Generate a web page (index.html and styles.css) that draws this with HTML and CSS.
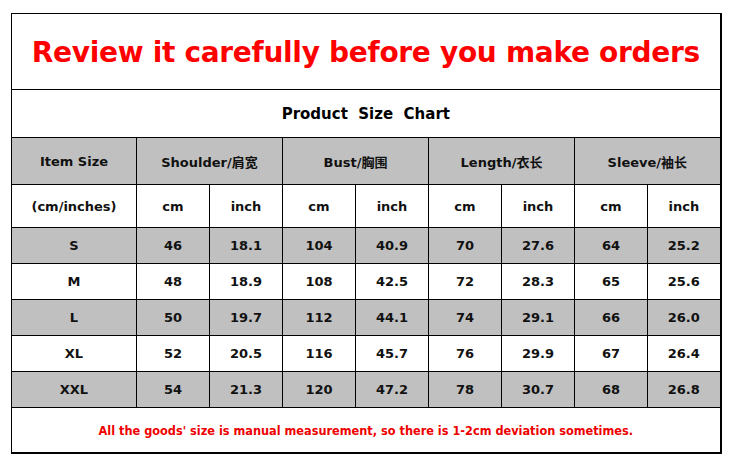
FILE: index.html
```html
<!DOCTYPE html>
<html>
<head>
<meta charset="utf-8">
<link rel="stylesheet" href="styles.css">
</head>
<body>
<table class="chart">
  <colgroup>
    <col class="c-first">
    <col class="c"><col class="c"><col class="c"><col class="c">
    <col class="c"><col class="c"><col class="c"><col class="c">
  </colgroup>
  <tr class="r-title"><td colspan="9" class="title">Review it carefully before you make orders</td></tr>
  <tr class="r-sub"><td colspan="9" class="sub">Product&nbsp; Size&nbsp; Chart</td></tr>
  <tr class="r-head gray">
    <td>Item Size</td>
    <td colspan="2">Shoulder/肩宽</td>
    <td colspan="2">Bust/胸围</td>
    <td colspan="2">Length/衣长</td>
    <td colspan="2">Sleeve/袖长</td>
  </tr>
  <tr class="r-unit">
    <td>(cm/inches)</td>
    <td>cm</td><td>inch</td><td>cm</td><td>inch</td><td>cm</td><td>inch</td><td>cm</td><td>inch</td>
  </tr>
  <tr class="r-data gray"><td>S</td><td>46</td><td>18.1</td><td>104</td><td>40.9</td><td>70</td><td>27.6</td><td>64</td><td>25.2</td></tr>
  <tr class="r-data"><td>M</td><td>48</td><td>18.9</td><td>108</td><td>42.5</td><td>72</td><td>28.3</td><td>65</td><td>25.6</td></tr>
  <tr class="r-data gray"><td>L</td><td>50</td><td>19.7</td><td>112</td><td>44.1</td><td>74</td><td>29.1</td><td>66</td><td>26.0</td></tr>
  <tr class="r-data"><td>XL</td><td>52</td><td>20.5</td><td>116</td><td>45.7</td><td>76</td><td>29.9</td><td>67</td><td>26.4</td></tr>
  <tr class="r-data gray"><td>XXL</td><td>54</td><td>21.3</td><td>120</td><td>47.2</td><td>78</td><td>30.7</td><td>68</td><td>26.8</td></tr>
  <tr class="r-foot"><td colspan="9" class="foot">All the goods' size is manual measurement, so there is 1-2cm deviation sometimes.</td></tr>
</table>
</body>
</html>
```
FILE: styles.css
```css
html, body {
  margin: 0;
  padding: 0;
  background: #ffffff;
}
body {
  padding: 13px 0 0 11px;
  font-family: "DejaVu Sans", "Noto Sans CJK SC", sans-serif;
  font-weight: bold;
  color: #111111;
}
.chart {
  border-collapse: collapse;
  table-layout: fixed;
  width: 710px;
  border: 1px solid #000;
  border-right-width: 2px;
  border-bottom-width: 2px;
}
.c-first { width: 125px; }
.c { width: 73px; }
.chart td {
  border: 1px solid #000;
  padding: 0;
  text-align: center;
  vertical-align: middle;
  font-size: 13px;
  white-space: nowrap;
  overflow: hidden;
}
.gray td { background: #c0c0c0; }
.r-title td { height: 73px; }
.r-sub td { height: 47px; }
.r-head td { height: 46px; }
.r-unit td { height: 42px; }
.r-data td { height: 35px; }
.r-foot td { height: 44px; }
.chart td.title {
  font-size: 28px;
  color: #ff0000;
  letter-spacing: -0.3px;
  padding-top: 2px;
}
.chart td.sub {
  font-size: 15px;
  color: #000;
}
.chart td.foot {
  font-family: "DejaVu Sans Condensed", "DejaVu Sans", sans-serif;
  font-stretch: condensed;
  font-size: 12.6px;
  color: #ee0000;
}
```
